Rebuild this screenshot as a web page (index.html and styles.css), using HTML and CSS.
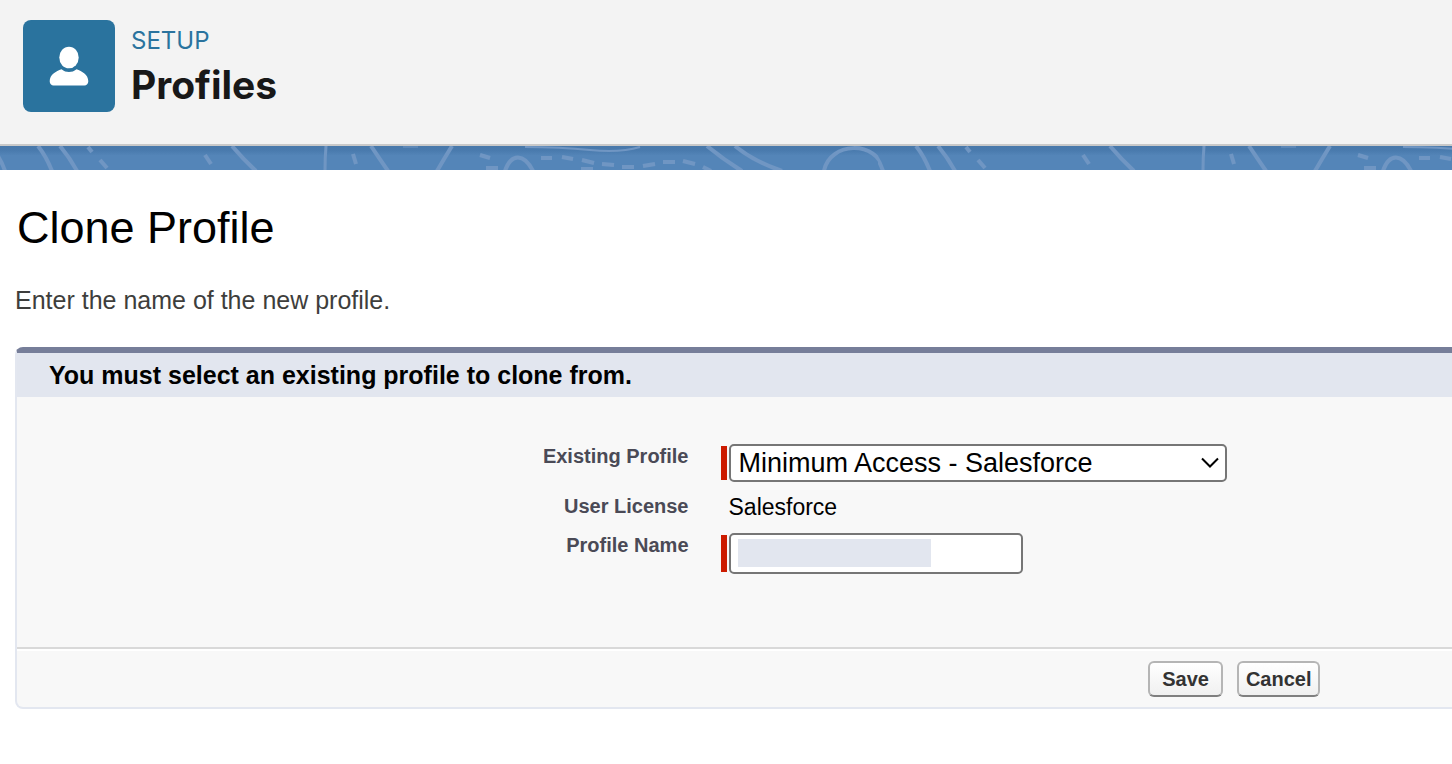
FILE: index.html
```html
<!DOCTYPE html>
<html lang="en">
<head>
    <meta charset="UTF-8">
    <meta name="viewport" content="width=device-width, initial-scale=1.0">
    <title>Profiles</title>
    <link rel="stylesheet" href="styles.css">
</head>
<body>
    <header class="page-header">
        <div class="header-icon">
            <svg width="40" height="40" viewBox="0 0 40 40" fill="#fff" aria-hidden="true">
                <ellipse cx="20" cy="11.5" rx="9.7" ry="10.8"/>
                <path d="M12.5 23.2C15 25.3 17.2 25.9 20 25.9S25 25.3 27.5 23.2C33 25.2 39.3 28.5 39.3 35.2C39.3 37.8 37.6 39.5 35.5 39.5H4.5C2.4 39.5.7 37.8.7 35.2C.7 28.5 7 25.2 12.5 23.2Z"/>
            </svg>
        </div>
        <div>
            <p class="header-kicker">SETUP</p>
            <h1 class="header-title">Profiles</h1>
        </div>
    </header>

    <svg class="banner" aria-hidden="true">
        <defs>
            <linearGradient id="shade" x1="0" y1="0" x2="0" y2="1">
                <stop offset="0" stop-color="#4878aa"/>
                <stop offset="0.2" stop-color="#4a7bae"/>
                <stop offset="0.4" stop-color="#5485b8"/>
                <stop offset="1" stop-color="#5485b8"/>
            </linearGradient>
            <pattern id="topo" width="878" height="24" patternUnits="userSpaceOnUse">
                <g fill="none" stroke="#7096c3" stroke-width="4">
                    <path d="M-3 9Q2 16 5 25"/>
                    <path d="M38 0Q46 10 52 25"/>
                    <path d="M60 0Q70 12 77 25"/>
                    <path d="M88 1L92 6"/>
                    <path d="M100 14L107 22"/>
                    <path d="M205 9L211 18"/>
                    <path d="M232 0Q243 13 256 25"/>
                    <path d="M326 0Q325 12 325 25" stroke-width="3"/>
                    <path d="M353 8L356 18"/>
                    <path d="M371 0Q379 12 388 25"/>
                    <path d="M403 1H418" stroke-width="1"/>
                    <path d="M452 0Q444 13 437 25"/>
                    <path d="M480 9L490 12"/>
                    <path d="M486 22H498"/>
                    <path d="M505 25C511 7 524 7 533 25"/>
                    <path d="M525 1Q560 1 590 4T640 1" stroke-width="2"/>
                    <path d="M541 12H552M562 11L573 13M582 14L594 17M602 18L614 19M622 21H634M643 20L655 18M663 16H675M683 15L695 18M703 21L711 25M581 23H593"/>
                    <path d="M707 0Q724 14 742 25"/>
                    <path d="M735 0Q753 15 782 25"/>
                    <path d="M824 25C829 -4 877 -7 884 25"/>
                </g>
            </pattern>
        </defs>
        <rect width="100%" height="24" fill="url(#shade)"/>
        <rect width="100%" height="24" fill="url(#topo)"/>
    </svg>

    <main class="content">
        <h2 class="content-title">Clone Profile</h2>
        <p class="content-intro">Enter the name of the new profile.</p>

        <form class="panel">
            <h3 class="panel-heading">You must select an existing profile to clone from.</h3>
            <div class="fields">
                <label class="field-label" for="existingProfile">Existing Profile</label>
                <div class="field-value required">
                    <select id="existingProfile" class="profile-select">
                        <option>Minimum Access - Salesforce</option>
                    </select>
                </div>
                <span class="field-label">User License</span>
                <div class="field-value license">Salesforce</div>
                <label class="field-label" for="profileName">Profile Name</label>
                <div class="field-value required">
                    <input type="text" id="profileName" class="profile-name">
                </div>
            </div>
            <div class="panel-footer">
                <button type="submit" class="btn btn-save">Save</button>
                <button type="button" class="btn">Cancel</button>
            </div>
        </form>
    </main>
</body>
</html>
```
FILE: styles.css
```css
* {
    box-sizing: border-box;
}
body {
    margin: 0;
    background-color: #fff;
    color: #000;
    font-family: "Liberation Sans", Arial, sans-serif;
    overflow-x: hidden;
}
h1, h2, h3, p {
    margin: 0;
}

/* Header */
.page-header {
    display: flex;
    gap: 16px;
    padding: 20px 23px 32px;
    background-color: #f3f3f3;
    border-bottom: 2px solid #c9c9c9;
    font-family: Inter, sans-serif;
}
.header-icon {
    display: flex;
    justify-content: center;
    align-items: center;
    width: 92px;
    height: 92px;
    border-radius: 8px;
    background-color: #2a739e;
}
.header-kicker {
    padding-top: 5px;
    font-size: 24px;
    line-height: 32px;
    color: #2a739e;
}
.header-title {
    font-size: 39px;
    line-height: 55px;
    font-weight: 700;
    color: #181818;
}
.banner {
    display: block;
    width: 100%;
    height: 24px;
}

/* Page content */
.content {
    padding: 32px 0 0 15px;
}
.content-title {
    padding-left: 2px;
    font-size: 45px;
    line-height: 52px;
    font-weight: 400;
}
.content-intro {
    margin: 32px 0;
    font-size: 25px;
    line-height: 29px;
    color: #3e3e3c;
}

/* The panel runs off the right edge of the window */
.panel {
    margin-right: -8px;
    border: 2px solid #e3e7f0;
    border-top: 6px solid #767e99;
    border-radius: 8px;
    background-color: #f8f8f8;
}
.panel-heading {
    padding: 6px 32px;
    font-size: 25px;
    line-height: 32px;
    background-color: #e2e6ef;
}
.fields {
    display: grid;
    grid-template-columns: 46.6% 1fr;
    column-gap: 32px;
    padding: 47px 0 73px;
}
.field-label {
    font-size: 20px;
    line-height: 24px;
    font-weight: bold;
    text-align: right;
    color: #4a4a56;
}
.field-value {
    display: flex;
    border-left: 6px solid transparent;
    padding-left: 2px;
}
.required {
    border-image: linear-gradient(transparent 2px, #cc1b00 2px, #cc1b00 calc(100% - 2px), transparent 0) 0 0 0 6;
}
.license {
    padding-top: 12px;
    padding-bottom: 13px;
    font-size: 23px;
    line-height: 26px;
}
.field-label:nth-child(3) {
    padding-top: 12px;
}
.profile-select, .profile-name {
    border: 2px solid #767676;
    border-radius: 5px;
    background-color: #fff;
    font-family: inherit;
    font-size: 27px;
    color: #000;
}
.profile-select {
    width: 498px;
    height: 38px;
    padding: 0 8px;
    appearance: none;
    background-image: url("data:image/svg+xml,%3Csvg xmlns='http://www.w3.org/2000/svg' width='18' height='12' viewBox='0 0 18 12'%3E%3Cpath d='M1 1.5L9 9.5L17 1.5' fill='none' stroke='%23000' stroke-width='2'/%3E%3C/svg%3E");
    background-repeat: no-repeat;
    background-position: right 6px center;
}
.profile-name {
    width: 294px;
    height: 41px;
    background-image: linear-gradient(#e2e6ef, #e2e6ef);
    background-repeat: no-repeat;
    background-position: 7px 4px;
    background-size: 193px 28px;
}

/* Buttons */
.panel-footer {
    display: flex;
    gap: 14px;
    padding: 12px 0 10px 78.5%;
    border-top: 2px solid #d9d9d9;
    box-shadow: inset 0 2px #fff;
}
.btn {
    flex: none;
    height: 36px;
    padding: 0 7px;
    border: 2px solid #b5b5b5;
    border-bottom-color: #7f7f7f;
    border-radius: 6px;
    background: linear-gradient(#fff, #f0f0f0);
    font-family: inherit;
    font-size: 20px;
    font-weight: bold;
    color: #333;
    cursor: pointer;
}
.btn-save {
    padding: 0 12px;
}
```
